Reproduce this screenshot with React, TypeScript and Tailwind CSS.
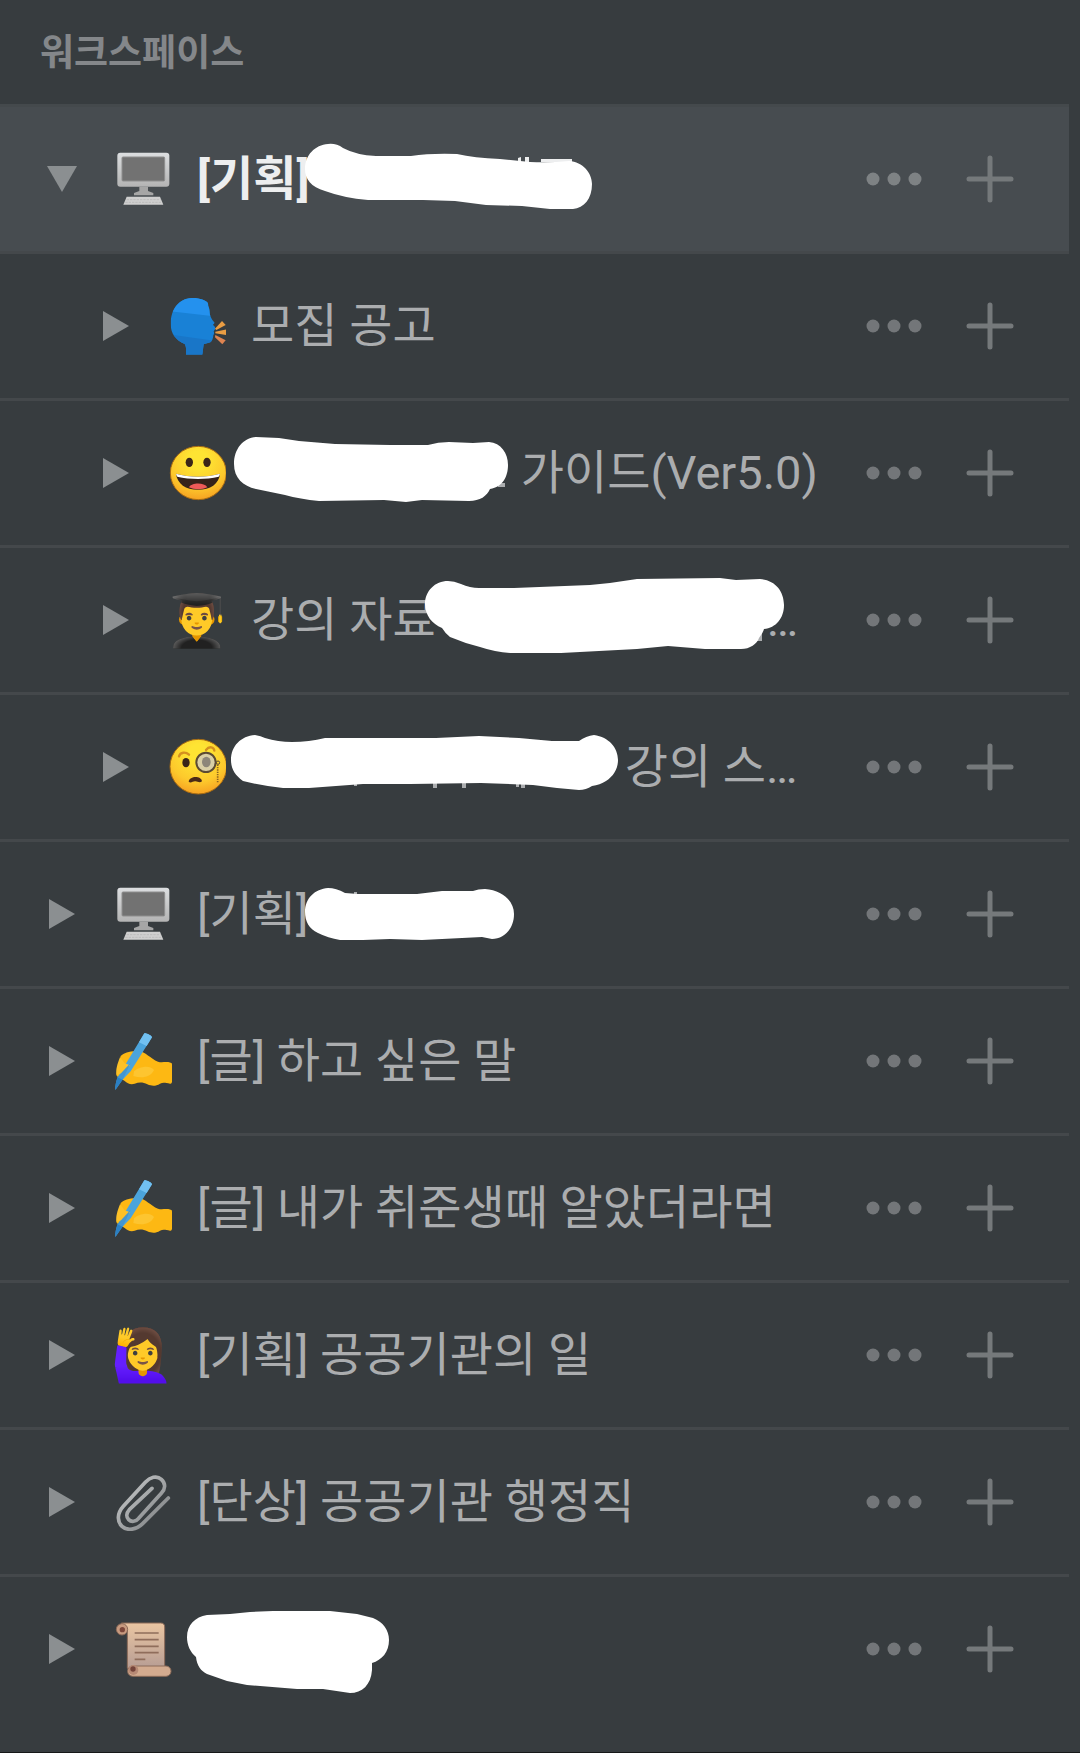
import type { ReactNode } from 'react';

function DesktopIcon() {
  return (
    <svg viewBox="0 0 174 174" className="size-[58px]" aria-hidden="true">
      <defs>
        <linearGradient id="case" x1="0" y1="0" x2="0" y2="1">
          <stop offset="0" stopColor="#dcdee0" />
          <stop offset="1" stopColor="#b4b4b4" />
        </linearGradient>
      </defs>
      <rect x="10" y="8" width="156" height="102" rx="9" fill="url(#case)" />
      <rect x="24" y="21" width="128" height="72" rx="3" fill="#727272" stroke="#8e8e8e" strokeWidth="3" />
      <path d="M76 110h26v13l16 6v7H60v-7l16-6z" fill="#a6a6a6" />
      <path d="M38 140h100l10 24H28z" fill="#cfcfcf" />
      <path d="M38 149h102M34 157h110" stroke="#b2b2b2" strokeWidth="2" strokeDasharray="7 3" />
    </svg>
  );
}

function SpeakingIcon() {
  return (
    <svg viewBox="0 0 174 174" className="size-[58px]" aria-hidden="true">
      <defs>
        <clipPath id="head">
          <path d="M70 3C96 2 112 10 119 17c2 4 1 7 2 11 5 11 3 19 5 26 4 11 8 17 13 22 2 4-3 5-4 8 4 3 8 7 7 11-1 4-4 4-5 8 2 4 2 8-1 12-1 10-3 17-9 21-6 3-14 3-20 6l-4 31H54c1-18 0-26-4-32C24 129 8 111 8 80 8 36 34 5 70 3z" />
        </clipPath>
      </defs>
      <g clipPath="url(#head)">
        <path d="M0 0h174v174H0z" fill="#1981d6" />
        <path d="M0 0h174v62L0 42z" fill="#2491ee" />
        <path d="M0 112l174 24v38H0z" fill="#1976c8" />
      </g>
      <g fill="#ea9d43">
        <path d="M141 95l21-23 11 12-28 15z" />
        <path d="M142 104l33-7v17l-33-5z" />
        <path d="M142 114l31 16-10 12-22-21z" fill="#de8451" />
      </g>
    </svg>
  );
}

function FaceGradient({ id }: { id: string }) {
  return (
    <radialGradient id={id} cx="0.5" cy="0.25" r="0.8">
      <stop offset="0.2" stopColor="#fee433" />
      <stop offset="0.65" stopColor="#fdc92c" />
      <stop offset="1" stopColor="#f59a20" />
    </radialGradient>
  );
}

function GrinIcon() {
  return (
    <svg viewBox="0 0 174 174" className="size-[58px]" aria-hidden="true">
      <defs>
        <FaceGradient id="grin" />
      </defs>
      <ellipse cx="91" cy="87" rx="84" ry="80" fill="url(#grin)" stroke="#a86b12" strokeWidth="3" />
      <ellipse cx="64" cy="55" rx="11" ry="14" fill="#3a2518" />
      <ellipse cx="117" cy="55" rx="11" ry="14" fill="#3a2518" />
      <path d="M24 89c42 12 90 12 132 0-3 31-29 48-66 48S28 120 24 89z" fill="#35221a" />
      <path d="M24 89c42 12 90 12 132 0-1 4-2 7-4 9-38 9-86 9-124 0-2-2-3-5-4-9z" fill="#fff" />
      <path d="M63 130c8-15 46-15 55 0-15 8-40 8-55 0z" fill="#ee5a58" />
    </svg>
  );
}

function MonocleIcon() {
  return (
    <svg viewBox="0 0 174 174" className="size-[58px]" aria-hidden="true">
      <defs>
        <FaceGradient id="monocle" />
      </defs>
      <ellipse cx="91" cy="86" rx="85" ry="82" fill="url(#monocle)" stroke="#a86b12" strokeWidth="3" />
      <path d="M33 55c4-13 20-14 30-5M114 36c10-13 24-9 25 2" fill="none" stroke="#d5901f" strokeWidth="7" strokeLinecap="round" />
      <ellipse cx="54" cy="74" rx="11" ry="14" fill="#3a2518" />
      <circle cx="114" cy="73" r="29" fill="#d9cfa6" stroke="#5b4a33" strokeWidth="6" />
      <ellipse cx="115" cy="72" rx="13" ry="16" fill="#8d8679" />
      <circle cx="150" cy="74" r="5" fill="none" stroke="#5b4a33" strokeWidth="3" />
      <path d="M149 80v55" stroke="#8a6420" strokeWidth="5" strokeDasharray="4 3" />
      <path d="M62 131c3-18 38-18 40-1-8 6-14-1-21 0s-14 6-19 1z" fill="#4a2a17" />
    </svg>
  );
}

function WritingIcon() {
  return (
    <svg viewBox="0 0 174 174" className="size-[58px]" aria-hidden="true">
      <path
        d="M20 72c10-10 28-15 50-14 22-3 38 22 62 31 10 4 24-1 38 3 4 1 4 2 4 8v48c0 5-2 8-6 7-14-3-22-4-30 0-12 7-22 9-38 2-12-6-24-7-38-2-12 4-22-1-30-8C20 138 6 136 7 126z"
        fill="#fdb813"
      />
      <path d="M60 118c12-12 46-22 60-4-10 22-36 26-62 18z" fill="#fdc530" />
      <path d="M91 4c4-2 23 6 23 12L50 118 24 145 4 174c-1-12 2-26 8-40z" fill="#4ba4dc" />
      <path d="M91 4c4-2 23 6 23 12L98 42 75 31z" fill="#71c0f1" />
      <path d="M12 132l14 11L4 174c-1-12 2-28 8-42z" fill="#2b80c4" />
      <path d="M18 76C10 96 4 116 8 128c12 0 26-10 40-28L32 94z" fill="#fdc127" />
      <path d="M50 92L26 143 10 136z" fill="#4496cf" />
    </svg>
  );
}

function ClipIcon() {
  return (
    <svg viewBox="0 0 174 174" className="size-[58px]" aria-hidden="true">
      <defs>
        <linearGradient id="clip" x1="0" y1="0" x2="1" y2="1">
          <stop offset="0" stopColor="#cfd1d2" />
          <stop offset="1" stopColor="#75787a" />
        </linearGradient>
      </defs>
      <path
        d="M163 75L86 152c-18 18-46 23-62 8s-14-40 4-60L94 28c14-15 34-22 48-9s12 29 0 42L74 136c-8 10-22 12-30 4s-7-20 2-30l68-64"
        fill="none"
        stroke="url(#clip)"
        strokeWidth="11"
        strokeLinecap="round"
        strokeLinejoin="round"
      />
    </svg>
  );
}

function ScrollIcon() {
  return (
    <svg viewBox="0 0 174 174" className="size-[58px]" aria-hidden="true">
      <defs>
        <linearGradient id="paper" x1="0" y1="0" x2="0" y2="1">
          <stop offset="0" stopColor="#eac6a2" />
          <stop offset="1" stopColor="#b79d94" />
        </linearGradient>
      </defs>
      <path d="M22 9h118c8 0 12 4 12 12v124H40V30z" fill="url(#paper)" stroke="#8b6a58" strokeWidth="3" />
      <circle cx="24" cy="28" r="17" fill="#c79a7f" stroke="#8b6a58" strokeWidth="3" />
      <circle cx="25" cy="29" r="8" fill="#7c473a" />
      <rect x="41" y="138" width="130" height="31" rx="15" fill="#d3ab8f" stroke="#8b6a58" strokeWidth="3" />
      <circle cx="58" cy="150" r="15" fill="#b78a75" />
      <circle cx="57" cy="147" r="8" fill="#74433a" />
      <path d="M62 39h72M62 59h72M62 79h72M62 98h72M62 118h32" stroke="#8f6d5b" strokeWidth="5" />
    </svg>
  );
}

function Glyph({ children }: { children: string }) {
  return <span className="text-[51px] leading-none">{children}</span>;
}

type Mark = { viewBox: string; className: string; d: string; rest?: string };

// Marker strokes that hide part of a page title. The rest is what still shows at the edges.
const marks: Record<string, Mark> = {
  first: {
    viewBox: '305 107 288 144',
    className: 'w-[288px] -ml-[5px]',
    d: 'M328 144Q336 143 343 148Q356 155 376 156L411 156Q431 153 457 154Q474 158 500 159L530 162Q550 163 569 161C583 162 592 173 592 184C592 199 584 208 573 209L550 209L522 206L486 205L455 201L423 200L368 200Q344 198 325 191C311 187 305 179 305 169C305 155 315 145 328 144Z',
    rest: 'M518 158l3-1v4h-3zM525 157h4v5h-4zM541 159h31v3h-31z',
  },
  guide: {
    viewBox: '234 401 275 144',
    className: 'w-[275px] -ml-[17px]',
    d: 'M256 437L279 438L299 441L335 444L390 445L428 445Q438 442 449 442L473 443L489 442C501 443 508 453 508 465C508 476 503 487 490 489C487 496 480 501 469 501L422 500L406 502L384 500L319 501Q300 499 285 495L256 489C243 486 234 478 234 464C234 449 243 438 256 437Z',
    rest: 'M498 483h7v4h-7z',
  },
  lecture: {
    viewBox: '425 548 360 144',
    className: 'w-[360px] -ml-[11px] -mr-[18px]',
    d: 'M448 581Q454 581 461 584Q470 588 479 588L514 588L590 585Q613 583 637 579L720 578L736 580L760 579C775 580 784 591 784 605C784 618 776 628 764 629Q763 633 759 638C757 644 750 649 741 649L705 649L668 646L637 649L561 653L510 653Q495 652 480 647Q464 643 450 637Q445 633 442 628C432 624 425 615 425 604C425 591 435 581 448 581Z',
    rest: 'M757 630h5v11h-5z',
  },
  script: {
    viewBox: '231 695 388 144',
    className: 'w-[388px] -ml-[20px] -mr-[6px]',
    d: 'M255 735Q261 736 265 738Q278 742 292 742Q309 742 325 738L436 738L479 736L519 738L552 741L579 741Q586 736 594 735C609 737 618 748 618 760C618 768 614 776 606 781Q600 785 592 786Q586 790 579 790L557 788L533 785L481 783L410 784L363 784L309 788L283 788Q262 786 243 781C235 775 231 769 231 760C231 746 241 736 255 735Z',
    rest: 'M354 783h3v3h-3zM433 783h4v5h-4zM462 783h4v5h-4zM516 784h3v3h-3zM521 784h4v4h-4z',
  },
  second: {
    viewBox: '305 842 210 144',
    className: 'w-[210px] -ml-[3px]',
    d: 'M328 888Q336 888 345 893L358 894L417 894L442 891L473 891Q478 889 485 889C502 890 514 901 514 914C514 929 504 939 492 939L482 937L422 940L390 939L363 940L340 940Q328 938 318 933C309 929 305 921 305 912C305 898 315 889 328 888Z',
    rest: 'M354 892h3v3h-3z',
  },
  last: {
    viewBox: '187 1577 203 144',
    className: 'w-[203px] -ml-[10px]',
    d: 'M207 1615L230 1614L250 1612L273 1611L330 1611L357 1614L373 1618C383 1622 389 1630 389 1640C389 1652 382 1660 372 1663L372 1670C371 1685 362 1693 350 1693L323 1689L297 1689L247 1685L227 1681L207 1674C201 1671 197 1666 196 1657C190 1652 187 1645 187 1637C187 1625 195 1617 207 1615Z',
  },
};

function Marker({ mark }: { mark: Mark }) {
  return (
    <svg viewBox={mark.viewBox} className={`h-36 shrink-0 ${mark.className}`} aria-hidden="true">
      {mark.rest && <path d={mark.rest} fill="currentColor" />}
      <path d={mark.d} fill="#fff" />
    </svg>
  );
}

type Page = {
  id: string;
  icon: ReactNode;
  before?: string;
  mark?: Mark;
  after?: string;
  nested?: boolean;
  open?: boolean;
};

const pages: Page[] = [
  { id: 'plan-1', icon: <DesktopIcon />, before: '[기획]', mark: marks.first, open: true },
  { id: 'notice', icon: <SpeakingIcon />, before: '모집 공고', nested: true },
  { id: 'guide', icon: <GrinIcon />, mark: marks.guide, after: ' 가이드(Ver5.0)', nested: true },
  { id: 'lecture', icon: <Glyph>👨‍🎓</Glyph>, before: '강의 자료', mark: marks.lecture, after: '…', nested: true },
  { id: 'script', icon: <MonocleIcon />, mark: marks.script, after: ' 강의 스…', nested: true },
  { id: 'plan-2', icon: <DesktopIcon />, before: '[기획]', mark: marks.second },
  { id: 'words', icon: <WritingIcon />, before: '[글] 하고 싶은 말' },
  { id: 'known', icon: <WritingIcon />, before: '[글] 내가 취준생때 알았더라면' },
  { id: 'work', icon: <Glyph>🙋‍♀️</Glyph>, before: '[기획] 공공기관의 일' },
  { id: 'admin', icon: <ClipIcon />, before: '[단상] 공공기관 행정직' },
  { id: 'last', icon: <ScrollIcon />, mark: marks.last },
];

function PageRow({ page }: { page: Page }) {
  return (
    <li
      className={`flex h-[147px] items-center border-b-3 border-[#44484b] pr-[55px] last:border-transparent ${
        page.nested ? 'pl-24' : 'pl-[42px]'
      } ${page.open ? 'bg-[#474c50]' : ''}`}
    >
      <button
        type="button"
        aria-label="하위 페이지"
        aria-expanded={!!page.open}
        className="flex h-12 w-10 shrink-0 items-center justify-center text-[#8b8f91]"
      >
        <svg viewBox="0 0 30 30" className={`size-[30px] ${page.open ? 'rotate-90' : ''}`} fill="currentColor">
          <path d="M2 0l26 15L2 30z" />
        </svg>
      </button>
      <span className="ml-8 flex w-[58px] shrink-0 justify-center">{page.icon}</span>
      <a
        href="#"
        className={`ml-[25px] flex min-w-0 flex-1 items-center whitespace-pre ${
          page.open ? 'font-bold text-[#edeeef]' : ''
        }`}
      >
        {page.before}
        {page.mark && <Marker mark={page.mark} />}
        {page.after}
      </a>
      <button type="button" aria-label="더 보기" className="shrink-0 text-white/30">
        <svg viewBox="0 0 56 48" className="h-12 w-14" fill="currentColor">
          <circle cx="7" cy="24" r="6.5" />
          <circle cx="28" cy="24" r="6.5" />
          <circle cx="49" cy="24" r="6.5" />
        </svg>
      </button>
      <button type="button" aria-label="페이지 추가" className="ml-11 shrink-0 text-[#75797b]">
        <svg viewBox="0 0 48 48" className="size-12" fill="none" stroke="currentColor" strokeWidth="5" strokeLinecap="round">
          <path d="M24 3v42M3 24h42" />
        </svg>
      </button>
    </li>
  );
}

export default function App() {
  return (
    <main className="min-h-screen border-b border-[#161818] bg-[#373c3f] pr-[11px] font-['Roboto','Noto_Sans_CJK_KR',sans-serif] text-[47px] leading-[60px] text-[#abadaf]">
      <h1 className="flex h-[104px] items-center px-10 pt-1 text-[37px] font-bold text-[#84878a]">워크스페이스</h1>
      <ul className="border-t-3 border-[#44494c]">
        {pages.map((page) => (
          <PageRow key={page.id} page={page} />
        ))}
      </ul>
    </main>
  );
}
